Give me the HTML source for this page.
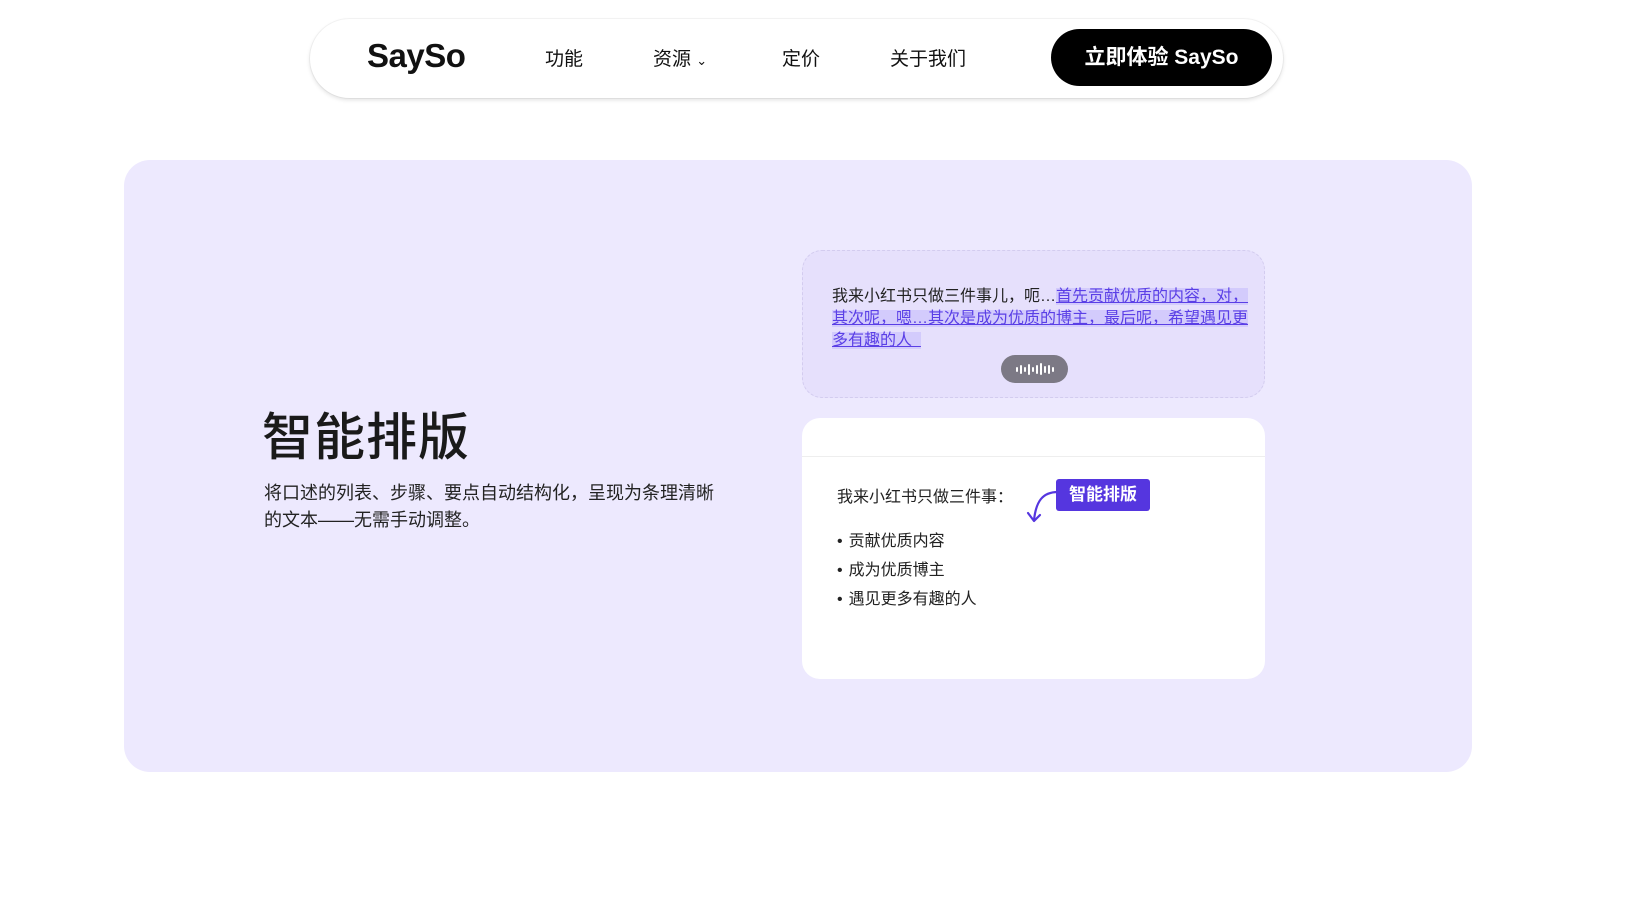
<!DOCTYPE html>
<html><head><meta charset="utf-8"><style>
*{margin:0;padding:0;box-sizing:border-box}
body{width:1644px;height:898px;background:#fff;font-family:"Liberation Sans","Noto Sans CJK SC",sans-serif;color:#111;position:relative;overflow:hidden}
.nav{position:absolute;left:310px;top:19px;width:973px;height:79px;border-radius:40px;background:#fff;box-shadow:0 2px 4px rgba(0,0,0,.12),0 0 0 1px rgba(0,0,0,.04)}
.logo{position:absolute;left:57px;top:18px;font-size:33px;font-weight:bold;letter-spacing:-0.5px}
.ni{position:absolute;top:25px;font-size:19px;color:#111}
.btn{position:absolute;left:741px;top:10px;width:221px;height:57px;border-radius:29px;background:#000;color:#fff;font-size:21px;font-weight:bold;text-align:center;line-height:57px}
.panel{position:absolute;left:124px;top:160px;width:1348px;height:612px;border-radius:26px;background:#ede9fe}
h1{position:absolute;left:262px;top:396px;font-size:51px;font-weight:500;color:#1a1a1a;letter-spacing:1px}
.p{position:absolute;left:264px;top:480px;width:455px;font-size:18px;line-height:27px;color:#222}
.c1{position:absolute;left:802px;top:250px;width:463px;height:148px;border-radius:20px;background:#e6e0fc;border:1px dashed #d3ccef}
.c1 .t{position:absolute;left:29px;top:35px;width:422px;font-size:16px;line-height:22px;color:#222}
.hl{background:#d3cbfc;color:#5a3fe6;text-decoration:underline}
.pill{position:absolute;left:198px;top:104px;width:67px;height:28px;border-radius:14px;background:#7c7985;display:flex;align-items:center;justify-content:center;gap:2px}
.pill i{display:block;width:2px;background:#fff;border-radius:1px}
.c2{position:absolute;left:802px;top:418px;width:463px;height:261px;border-radius:18px;background:#fff}
.c2 .d{position:absolute;left:0;right:0;top:38px;height:1px;background:#eee}
.c2 .t{position:absolute;left:35px;top:65px;font-size:16px;color:#222}
.c2 ul{position:absolute;left:35px;top:109px;list-style:none;font-size:16px;color:#222}
.c2 li{height:29px}
.c2 li:before{content:"•";margin-right:6px}
.badge{position:absolute;left:254px;top:61px;width:94px;height:32px;background:#5536df;border-radius:3px;color:#fff;font-weight:bold;font-size:17px;text-align:center;line-height:32px}
</style></head><body>
<div class="nav">
<div class="logo">SaySo</div>
<div class="ni" style="left:235px">功能</div>
<div class="ni" style="left:343px">资源 <span style="font-size:13px">⌄</span></div>
<div class="ni" style="left:472px">定价</div>
<div class="ni" style="left:580px">关于我们</div>
<div class="btn">立即体验 SaySo</div>
</div>
<div class="panel"></div>
<h1>智能排版</h1>
<div class="p">将口述的列表、步骤、要点自动结构化，呈现为条理清晰的文本——无需手动调整。</div>
<div class="c1">
<div class="t">我来小红书只做三件事儿，呃…<span class="hl">首先贡献优质的内容，对，其次呢，嗯…其次是成为优质的博主，最后呢，希望遇见更多有趣的人&nbsp;&nbsp;</span></div>
<div class="pill"><i style="height:5px"></i><i style="height:9px"></i><i style="height:5px"></i><i style="height:11px"></i><i style="height:5px"></i><i style="height:9px"></i><i style="height:12px"></i><i style="height:7px"></i><i style="height:9px"></i><i style="height:5px"></i></div>
</div>
<div class="c2">
<div class="d"></div>
<div class="t">我来小红书只做三件事：</div>
<svg style="position:absolute;left:216px;top:70px" width="42" height="40" viewBox="0 0 42 40"><path d="M40 4 C24 4 18 14 16 32" fill="none" stroke="#5536df" stroke-width="2.2" stroke-linecap="round"/><path d="M10 25 L16 33 L22 27" fill="none" stroke="#5536df" stroke-width="2.2" stroke-linecap="round" stroke-linejoin="round"/></svg>
<div class="badge">智能排版</div>
<ul><li>贡献优质内容</li><li>成为优质博主</li><li>遇见更多有趣的人</li></ul>
</div>
</body></html>
